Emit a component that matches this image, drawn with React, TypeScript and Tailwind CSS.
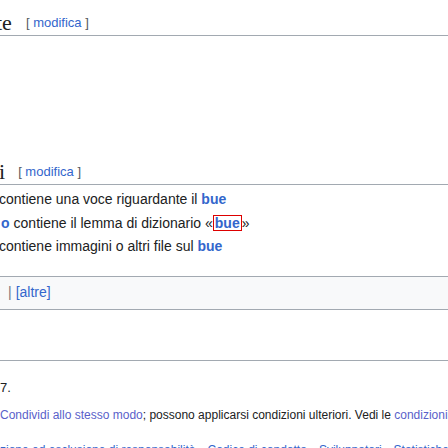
export default function App() {
  return (
    <div className="w-[448px] h-[448px] overflow-hidden bg-white text-[#202122] font-['Liberation_Sans',Arial,sans-serif]">
      {/* first heading, scrolled off to the left */}
      <div className="mt-[11px] h-[25px] border-b border-[#a2a9b1] flex items-center whitespace-nowrap">
        <span className="-ml-[4px] font-['Liberation_Serif','Times_New_Roman',serif] text-[22px] leading-[24px]">te</span>
        <span className="ml-[14px] text-[13px] text-[#54595d]">
          [ <span className="text-[#3366cc]">modifica</span> ]
        </span>
      </div>

      {/* second heading */}
      <div className="mt-[123px] h-[26px] border-b border-[#a2a9b1] flex items-center whitespace-nowrap">
        <span className="-ml-[1px] font-['Liberation_Serif','Times_New_Roman',serif] text-[22px] leading-[24px]">i</span>
        <span className="ml-[13px] text-[13px] text-[#54595d]">
          [ <span className="text-[#3366cc]">modifica</span> ]
        </span>
      </div>

      <div className="mt-[3px] text-[14px] leading-[23.6px] whitespace-nowrap">
        <div className="-ml-[1px]">
          contiene una voce riguardante il <b className="text-[#3366cc]">bue</b>
        </div>
        <div className="flex items-center">
          <b className="ml-[1px] text-[#3366cc]">o</b>
          <span className="ml-[4px]">contiene il lemma di dizionario «</span>
          <b className="text-[#3366cc] border border-[#d00] leading-[14px] px-[1px]">bue</b>
          <span>»</span>
        </div>
        <div className="-ml-[1px]">
          contiene immagini o altri file sul <b className="text-[#3366cc]">bue</b>
        </div>
      </div>

      {/* navbox strip */}
      <div className="mt-[17px] h-[34px] border-y border-[#a2a9b1] bg-[#f8f9fa] flex items-center pl-[8px] text-[14px] whitespace-nowrap">
        <span className="text-[#72777d]">|</span>
        <span className="ml-[4px] text-[#3366cc]">[altre]</span>
      </div>

      <div className="mt-[50px] border-t border-[#a2a9b1]" />

      {/* footer */}
      <div className="mt-[18px] text-[13px] leading-[18px] whitespace-nowrap">7.</div>
      <div className="mt-[9px] text-[12px] leading-[18px] whitespace-nowrap">
        <span className="text-[#5a5fca]">Condividi allo stesso modo</span>; possono applicarsi condizioni ulteriori. Vedi le{" "}
        <span className="text-[#5a5fca]">condizioni d'uso</span> per i dettagli.
      </div>
      <div className="mt-[17px] text-[12px] leading-[18px] whitespace-nowrap text-[#3366cc] flex gap-[12px]">
        <span>zione ed esclusione di responsabilità</span>
        <span>Codice di condotta</span>
        <span>Sviluppatori</span>
        <span>Statistiche</span>
      </div>
    </div>
  );
}
